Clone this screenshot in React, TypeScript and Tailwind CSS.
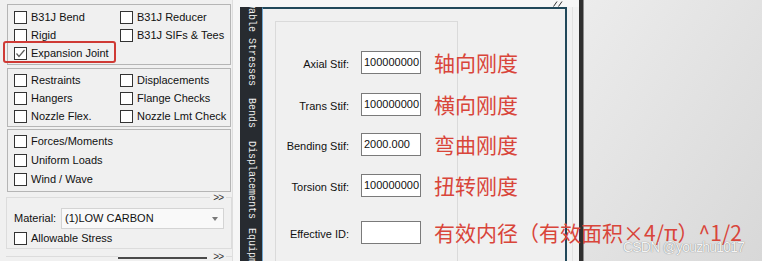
import React from "react";

const Check = ({ on }: { on?: boolean }) => (
  <span className="flex h-[13px] w-[13px] shrink-0 items-center justify-center border border-[#333333] bg-white">
    {on && (
      <svg width="11" height="11" viewBox="0 0 11 11">
        <polyline points="1.5,5.5 4,8.5 9.5,2" fill="none" stroke="#5a5a5a" strokeWidth="1.2" />
      </svg>
    )}
  </span>
);

const Opt = ({ label, on, h = "h-[18px]" }: { label: string; on?: boolean; h?: string }) => (
  <div className={`flex items-center gap-[4px] ${h}`}>
    <Check on={on} />
    <span className="whitespace-nowrap">{label}</span>
  </div>
);

// collapsible section header: line with ">>" near the right end
const More = ({ mt, children }: { mt: string; children?: React.ReactNode }) => (
  <div className={`ml-[6px] flex h-[9px] w-[226px] items-center ${mt}`}>
    {children ?? <div className="h-px flex-1 bg-[#dcdcdc]" />}
    <span className="px-[3px] text-[10px] leading-[9px] tracking-[-1px] text-[#333]">&gt;&gt;</span>
    <div className="h-px w-[6px] bg-[#dcdcdc]" />
  </div>
);

const stiff = [
  { label: "Axial Stif:", value: "100000000", note: "轴向刚度", mt: "mt-[29px]" },
  { label: "Trans Stif:", value: "100000000", note: "横向刚度", mt: "mt-[19px]" },
  { label: "Bending Stif:", value: "2000.000", note: "弯曲刚度", mt: "mt-[17px]" },
  { label: "Torsion Stif:", value: "100000000", note: "扭转刚度", mt: "mt-[18px]" },
  { label: "Effective ID:", value: "", note: "有效内径（有效面积×4/π）^1/2", mt: "mt-[24px]" },
];

const tabs = [
  { name: "Allowable Stresses", mt: "mt-[-29px]" },
  { name: "Bends", mt: "mt-[12px]" },
  { name: "Displacements", mt: "mt-[13px]" },
  { name: "Equipment", mt: "mt-[9px]" },
];

export default function App() {
  return (
    <div className="relative flex h-[261px] w-[762px] overflow-hidden bg-[#f0f0f0] font-['Liberation_Sans',Arial,sans-serif] text-[11px] text-[#111111]">
      {/* left options panel */}
      <div className="flex w-[232px] shrink-0 flex-col pt-[4px]">
        <div className="ml-[7px] h-[61px] w-[224px] border border-[#b5b5b5] pl-[6px] pt-[3px]">
          <div className="grid grid-cols-[106px_1fr]">
            <Opt label="B31J Bend" />
            <Opt label="B31J Reducer" />
            <Opt label="Rigid" />
            <Opt label="B31J SIFs & Tees" />
            <div className="relative">
              <Opt label="Expansion Joint" on />
              <span className="absolute left-[-11px] top-[-3px] h-[22px] w-[113px] rounded-[3px] border-2 border-[#cf3a35]" />
            </div>
          </div>
        </div>
        <div className="ml-[7px] mt-[3px] h-[59px] w-[224px] border border-[#b5b5b5] pl-[6px] pt-[2px]">
          <div className="grid grid-cols-[106px_1fr]">
            <Opt label="Restraints" />
            <Opt label="Displacements" />
            <Opt label="Hangers" />
            <Opt label="Flange Checks" />
            <Opt label="Nozzle Flex." />
            <Opt label="Nozzle Lmt Check" />
          </div>
        </div>
        <div className="ml-[7px] mt-[2px] h-[63px] w-[224px] border border-[#b5b5b5] pl-[6px] pt-[2px]">
          <Opt label="Forces/Moments" h="h-[19px]" />
          <Opt label="Uniform Loads" h="h-[19px]" />
          <Opt label="Wind / Wave" h="h-[19px]" />
        </div>

        <More mt="mt-[1px]" />
        <div className="ml-[6px] mt-[-5px] h-[52px] w-[226px] border-x border-b border-[#dcdcdc] pl-[7px] pt-[7px]">
          <div className="mt-[4px] flex h-[21px] items-center">
            <span className="w-[47px]">Material:</span>
            <div className="flex h-[21px] w-[163px] items-center justify-between border border-[#d4d4d4] bg-[#f9f9f9] pl-[3px] pr-[5px]">
              <span>(1)LOW CARBON</span>
              <svg width="6" height="4" viewBox="0 0 6 4">
                <polygon points="0,0 6,0 3,4" fill="#7a7a7a" />
              </svg>
            </div>
          </div>
          <div className="mt-[1px]">
            <Opt label="Allowable Stress" h="h-[16px]" />
          </div>
        </div>

        <More mt="mt-[3px]">
          <div className="h-px w-[112px] bg-[#dcdcdc]" />
          <div className="mt-[3px] h-[2px] w-[89px] bg-[#4a4a4a]" />
          <div className="flex-1" />
        </More>
      </div>

      {/* tabs + main panel */}
      <div className="flex shrink-0 flex-col border-l border-[#dedede] bg-[#f6f6f6]">
        <div className="flex h-[10px] justify-end pr-[16px] pt-[1px]">
          <svg width="10" height="6" viewBox="0 0 10 6">
            <line x1="0.5" y1="5.5" x2="4" y2="0.5" stroke="#333" strokeWidth="1" />
            <line x1="5.5" y1="5.5" x2="9" y2="0.5" stroke="#333" strokeWidth="1" />
          </svg>
        </div>
        <div className="flex flex-1">
          <div className="w-[7px] bg-[#f6f6f6]" />
          <div className="flex w-[22px] flex-col items-center overflow-hidden bg-[#272b30] font-['Liberation_Mono','Courier_New',monospace] text-[10px] leading-[10px] text-[#eeeeee]">
            {tabs.map((t) => (
              <span key={t.name} className={`whitespace-nowrap [writing-mode:vertical-rl] ${t.mt}`}>
                {t.name}
              </span>
            ))}
          </div>
          <div className="w-[305px] border-l border-r-2 border-t-2 border-l-[#6fa7d2] border-r-[#21485a] border-t-[#21485a] bg-[#f0f0f0] pl-[12px] pt-[12px]">
            <div className="h-[300px] w-[183px] border border-[#dadada]">
              {stiff.map((r) => (
                <div key={r.label} className={`flex h-[23px] items-center ${r.mt}`}>
                  <span className="w-[73px] shrink-0 whitespace-nowrap pt-[3px] text-right">{r.label}</span>
                  <div className="ml-[12px] flex h-[23px] w-[60px] shrink-0 items-center border border-[#7a7a7a] bg-white pl-[2px] text-[11px]">
                    {r.value}
                  </div>
                  <span className="relative z-10 ml-[13px] whitespace-nowrap font-['Noto_Sans_CJK_SC','Noto_Sans',sans-serif] text-[21px] leading-none text-[#d9453a]">
                    {r.note}
                  </span>
                </div>
              ))}
            </div>
          </div>
          <div className="w-[12px] bg-[#f2f2f2]">
            <div className="ml-[5px] h-full w-px bg-[#e2e2e2]" />
          </div>
        </div>
      </div>

      {/* right side */}
      <div className="w-[4px] shrink-0 bg-[#2f2f2f]" />
      <div className="w-px shrink-0 bg-[#8c8c8c]" />
      <div className="flex-1 bg-gradient-to-br from-[#ececec] to-[#d8d8d8]" />

      <span className="absolute left-[623px] top-[240px] z-20 whitespace-nowrap font-['Liberation_Sans',Arial,sans-serif] text-[14px] leading-none tracking-[-0.8px] text-[#f4f4f4] [text-shadow:0_0_1px_rgba(0,0,0,0.55)]">
        CSDN @youzhu1017
      </span>
    </div>
  );
}
